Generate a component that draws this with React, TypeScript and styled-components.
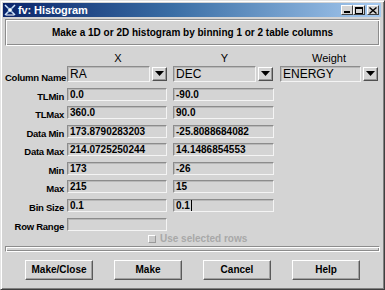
import React from "react";
import styled, { createGlobalStyle } from "styled-components";

const GlobalStyle = createGlobalStyle`
  html, body {
    margin: 0;
    padding: 0;
    background: #d4d4d4;
  }
  * {
    box-sizing: border-box;
  }
`;

const FACE = "#d4d4d4";
const FONT = `"Liberation Sans", Arial, Helvetica, sans-serif`;

const Window = styled.div`
  width: 385px;
  height: 290px;
  display: flex;
  flex-direction: column;
  background: ${FACE};
  border: 1px solid;
  border-color: #e4e4e4 #404040 #404040 #e4e4e4;
  box-shadow: inset 1px 1px #ffffff, inset -1px -1px #808080;
  padding: 2px 3px 3px 2px;
  font-family: ${FONT};
  overflow: hidden;
`;

const TitleBar = styled.div`
  height: 14px;
  display: flex;
  align-items: center;
  padding: 0 2px 0 1px;
  background: linear-gradient(to right, #0a246a 0%, #3a6ea5 45%, #a6caf0 100%);
  color: #ffffff;
`;

const TitleText = styled.span`
  flex: 1;
  font-size: 11px;
  font-weight: bold;
  margin-left: 2px;
  letter-spacing: -0.1px;
`;

const TitleButton = styled.div<{ $gap?: boolean }>`
  width: 12px;
  height: 10px;
  margin-left: ${({ $gap }) => ($gap ? "2px" : "0")};
  background: ${FACE};
  border: 1px solid;
  border-color: #ffffff #404040 #404040 #ffffff;
  display: flex;
  align-items: center;
  justify-content: center;
`;

const Body = styled.div`
  flex: 1;
  display: flex;
  flex-direction: column;
  padding: 2px 1px 0 2px;
`;

const Banner = styled.div`
  height: 27px;
  border: 1px solid;
  border-color: #8c8c8c #ffffff #ffffff #8c8c8c;
  box-shadow: inset 1px 1px #ffffff, inset -1px -1px #8c8c8c;
  display: flex;
  align-items: center;
  justify-content: center;
  font-size: 10px;
  font-weight: bold;
  color: #000000;
`;

const HeaderRow = styled.div`
  display: grid;
  grid-template-columns: 58px 102px 103px 98px;
  column-gap: 4px;
  margin-top: 5px;
  height: 13px;
  align-items: center;
`;

const ColHead = styled.div`
  text-align: center;
  font-size: 11px;
  color: #000000;
`;

const FormGrid = styled.div`
  display: grid;
  grid-template-columns: 58px 102px 103px 98px;
  grid-template-rows: 16px repeat(8, 13px);
  column-gap: 4px;
  row-gap: 5.57px;
  margin-top: 2px;
`;

const Label = styled.div`
  font-size: 9.5px;
  font-weight: bold;
  letter-spacing: -0.25px;
  text-align: right;
  align-self: end;
  line-height: 12px;
  white-space: nowrap;
  color: #000000;
  margin-right: -1px;
  margin-bottom: -2px;
`;

const Field = styled.div<{ $big?: boolean; $width?: number }>`
  width: ${({ $width }) => $width ?? 100}px;
  height: 100%;
  border: 1px solid;
  border-color: #8c8c8c #f4f4f4 #f4f4f4 #8c8c8c;
  box-shadow: inset 1px 1px #b8b8b8;
  background: ${FACE};
  padding-left: 2px;
  display: flex;
  align-items: center;
  font-size: ${({ $big }) => ($big ? "12px" : "10px")};
  font-weight: ${({ $big }) => ($big ? "normal" : "bold")};
  color: #000000;
  white-space: nowrap;
  overflow: hidden;
`;

const Caret = styled.span`
  display: inline-block;
  width: 1px;
  height: 11px;
  background: #000000;
  margin-left: 1px;
`;

const PickCell = styled.div`
  display: flex;
  align-items: center;
  gap: 2px;
`;

const DropButton = styled.div`
  width: 15px;
  height: 14px;
  border: 1px solid;
  border-color: #ffffff #505050 #505050 #ffffff;
  box-shadow: inset -1px -1px #9a9a9a;
  background: ${FACE};
  display: flex;
  align-items: center;
  justify-content: center;
`;

const CheckRow = styled.div`
  display: flex;
  align-items: center;
  margin-top: 2px;
  padding-left: 143px;
  height: 12px;
  gap: 4px;
  font-size: 10px;
  font-weight: bold;
  color: #a8a8a8;
`;

const CheckBox = styled.div`
  width: 8px;
  height: 8px;
  border: 1px solid;
  border-color: #ffffff #9a9a9a #9a9a9a #ffffff;
  background: #cacaca;
`;

const Separator = styled.div`
  height: 6px;
  margin-top: 1px;
  border: 1px solid;
  border-color: #8c8c8c #ffffff #ffffff #8c8c8c;
  box-shadow: inset 1px 1px #ffffff, inset -1px -1px #8c8c8c;
`;

const ButtonRow = styled.div`
  display: flex;
  gap: 21px;
  padding-left: 20px;
  margin-top: 8px;
`;

const ActionButton = styled.div`
  width: 68px;
  height: 20px;
  border: 1px solid;
  border-color: #ffffff #5a5a5a #5a5a5a #ffffff;
  box-shadow: inset -1px -1px #a0a0a0;
  background: ${FACE};
  display: flex;
  align-items: center;
  justify-content: center;
  font-size: 10px;
  font-weight: bold;
  color: #000000;
`;

const DownArrow = () => (
  <svg width="9" height="6" viewBox="0 0 9 6">
    <path d="M0 0 H9 L4.5 5 Z" fill="#000" />
  </svg>
);

const AppIcon = () => (
  <svg width="12" height="12" viewBox="0 0 12 12">
    <path d="M1 1 L11 11 M11 1 L1 11" stroke="#cfe6ff" strokeWidth="1.5" />
    <rect x="4" y="4" width="4" height="4" fill="#ffffff" stroke="#3a6ea5" strokeWidth="0.6" />
    <path d="M2 11 H10" stroke="#ffffff" strokeWidth="1" />
  </svg>
);

const rows: { label: string; x: string; y: string; caret?: boolean }[] = [
  { label: "TLMin", x: "0.0", y: "-90.0" },
  { label: "TLMax", x: "360.0", y: "90.0" },
  { label: "Data Min", x: "173.8790283203", y: "-25.8088684082" },
  { label: "Data Max", x: "214.0725250244", y: "14.1486854553" },
  { label: "Min", x: "173", y: "-26" },
  { label: "Max", x: "215", y: "15" },
  { label: "Bin Size", x: "0.1", y: "0.1", caret: true },
];

const App: React.FC = () => {
  return (
    <>
      <GlobalStyle />
      <Window>
        <TitleBar>
          <AppIcon />
          <TitleText>fv: Histogram</TitleText>
          <TitleButton>
            <svg width="6" height="6" viewBox="0 0 6 6">
              <rect x="0" y="4" width="6" height="2" fill="#000" />
            </svg>
          </TitleButton>
          <TitleButton>
            <svg width="8" height="7" viewBox="0 0 8 7">
              <rect x="0.5" y="0.5" width="7" height="6" fill="none" stroke="#000" />
              <rect x="0" y="0" width="8" height="2" fill="#000" />
            </svg>
          </TitleButton>
          <TitleButton $gap>
            <svg width="8" height="7" viewBox="0 0 8 7">
              <path d="M0.5 0.5 L7.5 6.5 M7.5 0.5 L0.5 6.5" stroke="#000" strokeWidth="1.4" />
            </svg>
          </TitleButton>
        </TitleBar>

        <Body>
          <Banner>Make a 1D or 2D histogram by binning 1 or 2 table columns</Banner>

          <HeaderRow>
            <span />
            <ColHead>X</ColHead>
            <ColHead>Y</ColHead>
            <ColHead>Weight</ColHead>
          </HeaderRow>

          <FormGrid>
            <Label>Column Name</Label>
            {["RA", "DEC", "ENERGY"].map((name) => (
              <PickCell key={name}>
                <Field $big $width={83}>{name}</Field>
                <DropButton>
                  <DownArrow />
                </DropButton>
              </PickCell>
            ))}

            {rows.map((r) => (
              <React.Fragment key={r.label}>
                <Label>{r.label}</Label>
                <Field>{r.x}</Field>
                <Field $width={101}>
                  {r.y}
                  {r.caret && <Caret />}
                </Field>
                <span />
              </React.Fragment>
            ))}

            <Label>Row Range</Label>
            <Field />
            <span />
            <span />
          </FormGrid>

          <CheckRow>
            <CheckBox />
            <span>Use selected rows</span>
          </CheckRow>

          <Separator />

          <ButtonRow>
            <ActionButton>Make/Close</ActionButton>
            <ActionButton>Make</ActionButton>
            <ActionButton>Cancel</ActionButton>
            <ActionButton>Help</ActionButton>
          </ButtonRow>
        </Body>
      </Window>
    </>
  );
};

export default App;
